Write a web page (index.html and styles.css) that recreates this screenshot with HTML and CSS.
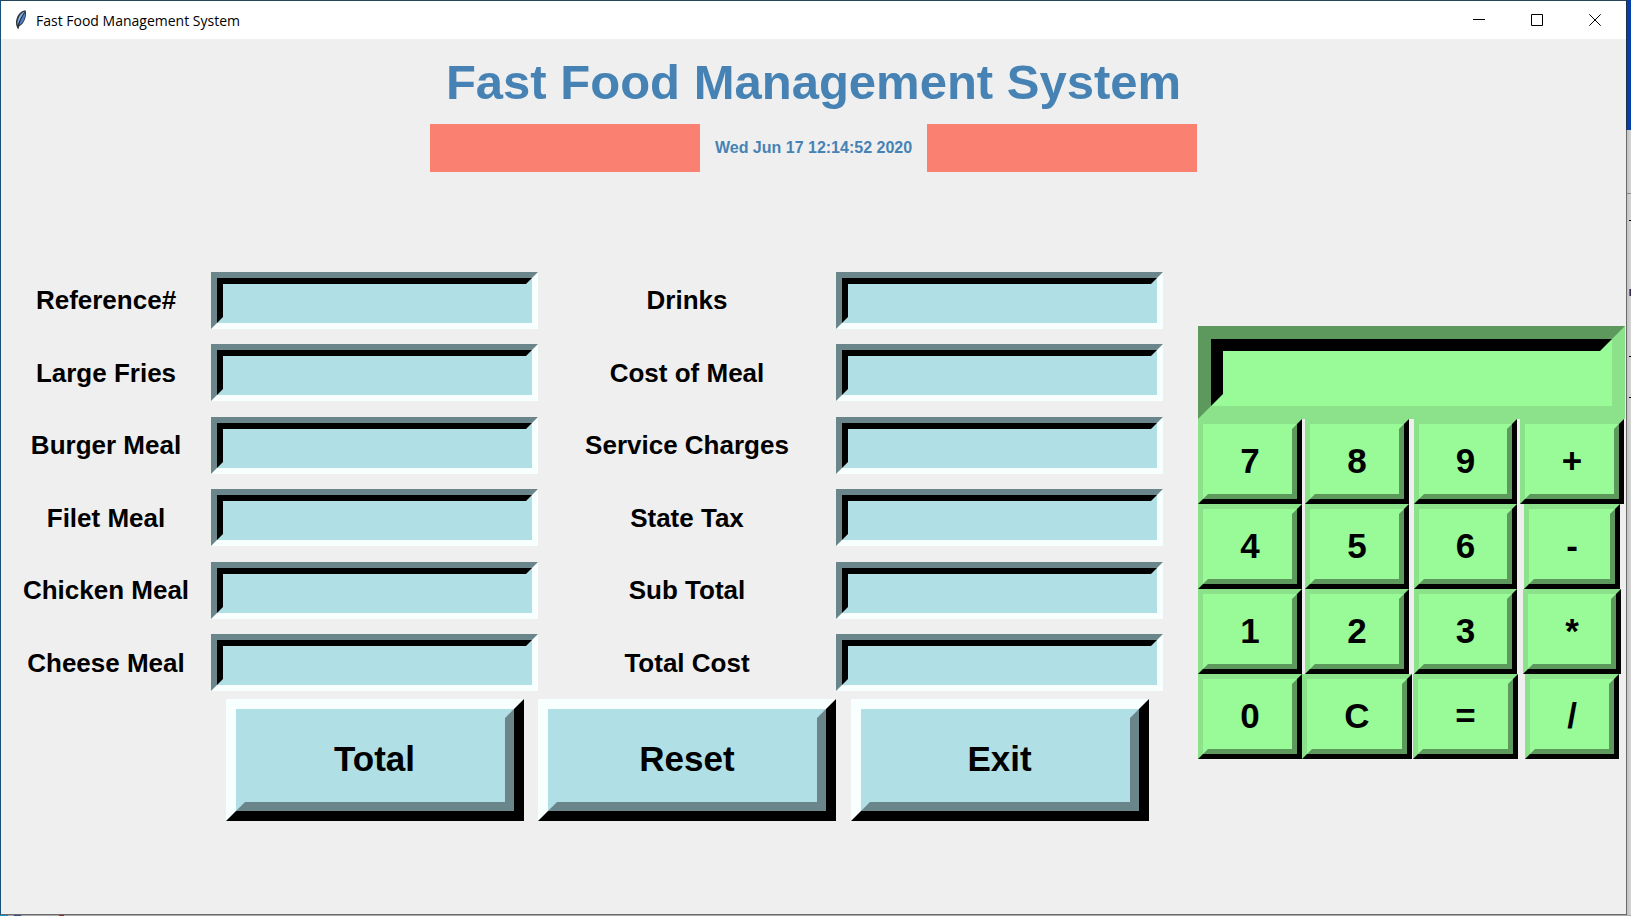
FILE: index.html
```html
<!DOCTYPE html>
<html lang="en">
<head>
<meta charset="utf-8">
<title>Fast Food Management System</title>
<link rel="stylesheet" href="styles.css">
</head>
<body>
<div class="desktop">
  <div class="window">
    <header class="titlebar">
      <svg class="feather" width="12" height="20" viewBox="0 0 12 20" aria-hidden="true">
        <path d="M10.5 0.3 C7 0.6 3.6 3.5 2 7.5 C0.6 11 0.8 14 1.6 16.2 L3.2 19.6 L4.2 16.2 C7 15 9.2 12 10.4 8 C11.2 5 11.3 2 10.5 0.3 Z" fill="#2c3440"/>
        <path d="M9.8 1.4 C7 2.4 4.6 5 3.4 8.4 C2.4 11.4 2.2 13.6 2.6 15 C4 11 6.4 6 9.8 1.4 Z" fill="#8fb0dc"/>
        <path d="M10 2.4 C10.4 5 9.8 8 8.6 10.4 C7.4 12.8 5.6 14.6 4 15 C4.8 11.4 7 6.4 10 2.4 Z" fill="#4a7fc4"/>
        <path d="M9.4 3 C6 8 3.6 13 3 18.6" fill="none" stroke="#1d2129" stroke-width="0.5"/>
      </svg>
      <span class="titlebar-text">Fast Food Management System</span>
      <div class="controls">
        <button class="control" type="button" aria-label="Minimize"><svg width="12" height="12" viewBox="0 0 12 12"><path d="M0 5.5H12"/></svg></button>
        <button class="control" type="button" aria-label="Maximize"><svg width="12" height="12" viewBox="0 0 12 12"><path d="M0.5 0.5H11.5V11.5H0.5Z"/></svg></button>
        <button class="control" type="button" aria-label="Close"><svg width="12" height="12" viewBox="0 0 12 12"><path d="M0.3 0.3L11.7 11.7M11.7 0.3L0.3 11.7"/></svg></button>
      </div>
    </header>

    <h1 class="heading">Fast Food Management System</h1>
    <div class="clock">
      <div class="clock-block"></div>
      <time class="clock-time" datetime="2020-06-17T12:14:52">Wed Jun 17 12:14:52 2020</time>
      <div class="clock-block"></div>
    </div>

    <main class="main">
      <form class="order">
        <div class="fields">
          <label class="label" for="reference">Reference#</label><span class="entry"><input class="entry-input" id="reference" type="text"></span>
          <label class="label" for="drinks">Drinks</label><span class="entry"><input class="entry-input" id="drinks" type="text"></span>
          <label class="label" for="fries">Large Fries</label><span class="entry"><input class="entry-input" id="fries" type="text"></span>
          <label class="label" for="cost">Cost of Meal</label><span class="entry"><input class="entry-input" id="cost" type="text"></span>
          <label class="label" for="burger">Burger Meal</label><span class="entry"><input class="entry-input" id="burger" type="text"></span>
          <label class="label" for="service">Service Charges</label><span class="entry"><input class="entry-input" id="service" type="text"></span>
          <label class="label" for="filet">Filet Meal</label><span class="entry"><input class="entry-input" id="filet" type="text"></span>
          <label class="label" for="tax">State Tax</label><span class="entry"><input class="entry-input" id="tax" type="text"></span>
          <label class="label" for="chicken">Chicken Meal</label><span class="entry"><input class="entry-input" id="chicken" type="text"></span>
          <label class="label" for="subtotal">Sub Total</label><span class="entry"><input class="entry-input" id="subtotal" type="text"></span>
          <label class="label" for="cheese">Cheese Meal</label><span class="entry"><input class="entry-input" id="cheese" type="text"></span>
          <label class="label" for="total">Total Cost</label><span class="entry"><input class="entry-input" id="total" type="text"></span>
        </div>
        <div class="actions">
          <button class="action action-first" type="button"><span class="action-face">Total</span></button>
          <button class="action" type="button"><span class="action-face">Reset</span></button>
          <button class="action" type="button"><span class="action-face">Exit</span></button>
        </div>
      </form>

      <section class="calculator" aria-label="Calculator">
        <div class="display"><input class="display-input" type="text" aria-label="Calculator display"></div>
        <div class="keys">
          <button class="key" type="button"><span class="key-face">7</span></button>
          <button class="key" type="button"><span class="key-face">8</span></button>
          <button class="key" type="button"><span class="key-face">9</span></button>
          <button class="key" type="button"><span class="key-face">+</span></button>
          <button class="key" type="button"><span class="key-face">4</span></button>
          <button class="key" type="button"><span class="key-face">5</span></button>
          <button class="key" type="button"><span class="key-face">6</span></button>
          <button class="key" type="button"><span class="key-face">-</span></button>
          <button class="key" type="button"><span class="key-face">1</span></button>
          <button class="key" type="button"><span class="key-face">2</span></button>
          <button class="key" type="button"><span class="key-face">3</span></button>
          <button class="key" type="button"><span class="key-face">*</span></button>
          <button class="key" type="button"><span class="key-face">0</span></button>
          <button class="key" type="button"><span class="key-face">C</span></button>
          <button class="key" type="button"><span class="key-face">=</span></button>
          <button class="key" type="button"><span class="key-face">/</span></button>
        </div>
      </section>
    </main>
  </div>
  <div class="behind-right"></div>
  <div class="behind-bottom"></div>
</div>
</body>
</html>
```

FILE: styles.css
```css
* {
  box-sizing: border-box;
}

body {
  margin: 0;
  font-family: "Liberation Sans", Arial, sans-serif;
  color: #000;
}

button,
input {
  margin: 0;
  padding: 0;
  border: 0;
  border-radius: 0;
  font: inherit;
  color: inherit;
}

.desktop {
  display: grid;
  grid-template-columns: minmax(0, 1fr) 5px;
  grid-template-rows: 1fr 1px;
  min-height: 100vh;
}

.window {
  border: 1px solid #17507a;
  border-top-color: #26465c;
  border-bottom-color: #6b6b6b;
  border-right: 0;
  background: #efefef;
}

/* Slivers of the desktop that show past the window's edges */
.behind-right {
  background:
    linear-gradient(#1c2f4c, #1c2f4c) 0 0 / 1px 130px no-repeat,
    linear-gradient(#6b6b6b, #6b6b6b) 0 0 / 1px 100% no-repeat,
    linear-gradient(#000, #000) 3px 220px / 2px 1px no-repeat,
    linear-gradient(90deg, #c87820, #0a1464) 3px 289px / 2px 7px no-repeat,
    linear-gradient(#000, #000) 3px 356px / 2px 1px no-repeat,
    linear-gradient(#000, #000) 3px 397px / 2px 1px no-repeat,
    linear-gradient(#8c8c8c, #8c8c8c) 0 193px / 5px 1px no-repeat,
    linear-gradient(#0440a8, #0440a8) 0 0 / 5px 130px no-repeat,
    linear-gradient(90deg, #bdbdbd, #d6d6d6);
}

.behind-bottom {
  grid-column: 1 / -1;
  background:
    linear-gradient(#1090c8, #1090c8) 0 0 / 8px 1px no-repeat,
    linear-gradient(#2c4c84, #2c4c84) 14px 0 / 7px 1px no-repeat,
    linear-gradient(#8c2c24, #8c2c24) 59px 0 / 5px 1px no-repeat,
    #a8a8a8;
}

.titlebar {
  display: flex;
  align-items: center;
  height: 38px;
  padding: 0 2px 0 14px;
  background: #fff;
}

.titlebar-text {
  flex: 1;
  margin-left: 9px;
  font-family: "Open Sans", "Noto Sans", sans-serif;
  font-size: 14px;
}

.controls {
  display: flex;
  height: 100%;
}

.control {
  display: grid;
  place-items: center;
  width: 58px;
  background: none;
}

.control path {
  fill: none;
  stroke: #000;
  stroke-width: 1;
}

.heading {
  margin: 0;
  padding-top: 2px;
  font-size: 49px;
  line-height: 83px;
  text-align: center;
  color: #4682b4;
}

.clock {
  display: grid;
  grid-template-columns: 270px 227px 270px;
  justify-content: center;
  align-items: center;
}

.clock-block {
  height: 48px;
  background: #fa8072;
}

.clock-time {
  font-size: 16px;
  font-weight: bold;
  text-align: center;
  color: #4682b4;
}

.main {
  display: grid;
  grid-template-columns: minmax(0, 1162fr) minmax(0, 427fr);
  column-gap: 35px;
  align-items: center;
  padding: 92px 1px 0 0;
  font-weight: bold;
}

.fields,
.actions {
  display: grid;
  grid-template-columns: 210fr 327fr 298fr 327fr;
  align-items: center;
}

.fields {
  grid-template-rows: repeat(6, 1fr);
  min-height: 435px;
}

.label {
  padding-top: 1px;
  font-size: 26px;
  text-align: center;
  white-space: nowrap;
}

/* Each bevel is an outer and an inner border */
.entry {
  display: block;
  border: 6px solid;
  border-color: #6b868a #f7ffff #f7ffff #6b868a;
}

.entry-input {
  display: block;
  width: 100%;
  height: 45px;
  border: 6px solid;
  border-color: #000 #b0e0e6 #b0e0e6 #000;
  background: #b0e0e6;
  font-size: 26px;
}

.action {
  justify-self: center;
  width: 298px;
  border: 10px solid;
  border-color: #f7ffff #000 #000 #f7ffff;
  font-size: 35px;
}

.action-first {
  grid-column: 2;
}

.action-face {
  display: block;
  padding-bottom: 2px;
  border: 9px solid;
  border-color: #b0e0e6 #6b868a #6b868a #b0e0e6;
  background: #b0e0e6;
  line-height: 82px;
}

.display {
  border: 13px solid;
  border-color: #5d985d #8be28b #8be28b #5d985d;
}

.display-input {
  display: block;
  width: 100%;
  height: 67px;
  border: 12px solid;
  border-color: #000 #98fb98 #98fb98 #000;
  background: #98fb98;
  font-size: 35px;
}

.keys {
  display: grid;
  grid-template-columns: 104fr 110fr 107fr 106fr;
  justify-items: center;
}

.key {
  border: 5px solid;
  border-color: #8be28b #000 #000 #8be28b;
  font-size: 35px;
}

.key-face {
  display: block;
  padding: 0 32px 2px;
  border: 5px solid;
  border-color: #98fb98 #5d985d #5d985d #98fb98;
  background: #98fb98;
  line-height: 63px;
}
```
